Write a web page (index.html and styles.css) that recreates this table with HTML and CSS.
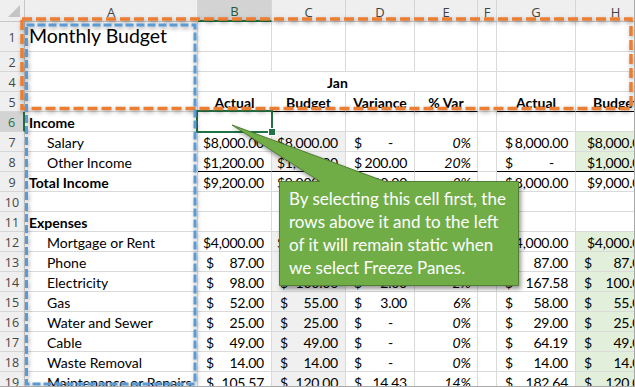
FILE: index.html
```html
<!DOCTYPE html>
<html>
<head>
<meta charset="utf-8">
<link rel="stylesheet" href="styles.css">
</head>
<body>
<div class="sheet">
  <div class="grid">
    <div class="corner"><svg width="14" height="14" viewBox="0 0 14 14"><polygon points="13,1 13,13 1,13" fill="#c4c4c4"/></svg></div>
    <div class="ch">A</div><div class="ch sel">B</div><div class="ch">C</div><div class="ch">D</div><div class="ch">E</div><div class="ch">F</div><div class="ch">G</div><div class="ch">H</div>

    <div class="rh">1</div><div class="c title">Monthly Budget</div><div class="c"></div><div class="c"></div><div class="c"></div><div class="c"></div><div class="c"></div><div class="c"></div><div class="c"></div>

    <div class="rh">2</div><div class="c"></div><div class="c"></div><div class="c"></div><div class="c"></div><div class="c"></div><div class="c"></div><div class="c"></div><div class="c"></div>

    <div class="rh">4</div><div class="c"></div><div class="c hd span4">Jan</div><div class="c"></div><div class="c"></div><div class="c"></div>

    <div class="rh">5</div><div class="c"></div><div class="c hd ul">Actual</div><div class="c hd ul">Budget</div><div class="c hd ul">Variance</div><div class="c hd ul">% Var</div><div class="c"></div><div class="c hd ul">Actual</div><div class="c hd ul">Budget</div>

    <div class="rh rsel">6</div><div class="c b lbl">Income</div><div class="c"></div><div class="c"></div><div class="c"></div><div class="c"></div><div class="c"></div><div class="c"></div><div class="c"></div>

    <div class="rh">7</div><div class="c ind">Salary</div><div class="c cur">$8,000.00</div><div class="c cur gy">$8,000.00</div><div class="c acc"><span>$</span><span class="dash">-</span></div><div class="c pct">0%</div><div class="c"></div><div class="c acc"><span>$</span><span>8,000.00</span></div><div class="c cur gr">$8,000.00</div>

    <div class="rh">8</div><div class="c ind">Other Income</div><div class="c cur ul">$1,200.00</div><div class="c cur gy ul">$1,000.00</div><div class="c acc ul"><span>$</span><span>200.00</span></div><div class="c pct ul">20%</div><div class="c"></div><div class="c acc ul"><span>$</span><span class="dash">-</span></div><div class="c cur gr ul">$1,000.00</div>

    <div class="rh">9</div><div class="c b lbl">Total Income</div><div class="c cur">$9,200.00</div><div class="c cur">$9,000.00</div><div class="c acc"><span>$</span><span>200.00</span></div><div class="c pct">2%</div><div class="c"></div><div class="c acc"><span>$</span><span>8,000.00</span></div><div class="c cur">$9,000.00</div>

    <div class="rh">10</div><div class="c"></div><div class="c"></div><div class="c"></div><div class="c"></div><div class="c"></div><div class="c"></div><div class="c"></div><div class="c"></div>

    <div class="rh">11</div><div class="c b lbl">Expenses</div><div class="c"></div><div class="c"></div><div class="c"></div><div class="c"></div><div class="c"></div><div class="c"></div><div class="c"></div>

    <div class="rh">12</div><div class="c ind">Mortgage or Rent</div><div class="c cur">$4,000.00</div><div class="c cur gy">$4,000.00</div><div class="c acc"><span>$</span><span class="dash">-</span></div><div class="c pct">0%</div><div class="c"></div><div class="c acc"><span>$</span><span>4,000.00</span></div><div class="c cur gr">$4,000.00</div>

    <div class="rh">13</div><div class="c ind">Phone</div><div class="c acc"><span>$</span><span>87.00</span></div><div class="c acc gy"><span>$</span><span>87.00</span></div><div class="c acc"><span>$</span><span class="dash">-</span></div><div class="c pct">0%</div><div class="c"></div><div class="c acc"><span>$</span><span>87.00</span></div><div class="c acc gr"><span>$</span><span>87.00</span></div>

    <div class="rh">14</div><div class="c ind">Electricity</div><div class="c acc"><span>$</span><span>98.00</span></div><div class="c acc gy"><span>$</span><span>100.00</span></div><div class="c acc"><span>$</span><span>2.00</span></div><div class="c pct">2%</div><div class="c"></div><div class="c acc"><span>$</span><span>167.58</span></div><div class="c acc gr"><span>$</span><span>100.00</span></div>

    <div class="rh">15</div><div class="c ind">Gas</div><div class="c acc"><span>$</span><span>52.00</span></div><div class="c acc gy"><span>$</span><span>55.00</span></div><div class="c acc"><span>$</span><span>3.00</span></div><div class="c pct">6%</div><div class="c"></div><div class="c acc"><span>$</span><span>58.00</span></div><div class="c acc gr"><span>$</span><span>55.00</span></div>

    <div class="rh">16</div><div class="c ind">Water and Sewer</div><div class="c acc"><span>$</span><span>25.00</span></div><div class="c acc gy"><span>$</span><span>25.00</span></div><div class="c acc"><span>$</span><span class="dash">-</span></div><div class="c pct">0%</div><div class="c"></div><div class="c acc"><span>$</span><span>29.00</span></div><div class="c acc gr"><span>$</span><span>25.00</span></div>

    <div class="rh">17</div><div class="c ind">Cable</div><div class="c acc"><span>$</span><span>49.00</span></div><div class="c acc gy"><span>$</span><span>49.00</span></div><div class="c acc"><span>$</span><span class="dash">-</span></div><div class="c pct">0%</div><div class="c"></div><div class="c acc"><span>$</span><span>64.19</span></div><div class="c acc gr"><span>$</span><span>49.00</span></div>

    <div class="rh">18</div><div class="c ind">Waste Removal</div><div class="c acc"><span>$</span><span>14.00</span></div><div class="c acc gy"><span>$</span><span>14.00</span></div><div class="c acc"><span>$</span><span class="dash">-</span></div><div class="c pct">0%</div><div class="c"></div><div class="c acc"><span>$</span><span>14.00</span></div><div class="c acc gr"><span>$</span><span>14.00</span></div>

    <div class="rh">19</div><div class="c ind">Maintenance or Repairs</div><div class="c acc"><span>$</span><span>105.57</span></div><div class="c acc gy"><span>$</span><span>120.00</span></div><div class="c acc"><span>$</span><span>14.43</span></div><div class="c pct">14%</div><div class="c"></div><div class="c acc"><span>$</span><span>182.64</span></div><div class="c acc gr"><span>$</span><span>120.00</span></div>
  </div>

  <div class="selbox"><div class="handle"></div></div>

  <svg class="frames" width="635" height="387" viewBox="0 0 635 387">
    <rect class="orange" x="22" y="19" width="609" height="89.5"/>
    <rect class="blue" x="26.5" y="25" width="168.5" height="359"/>
  </svg>

  <svg class="callout-shape" width="635" height="387" viewBox="0 0 635 387">
    <path d="M279.5,181.5 L320,181.5 L232,125 L385,181.5 L518.5,181.5 L518.5,285.5 L279.5,285.5 Z"/>
  </svg>
  <div class="callout-text">By selecting this cell first, the<br>rows above it and to the left<br>of it will remain static when<br>we select Freeze Panes.</div>
</div>
</body>
</html>
```
FILE: styles.css
```css
html, body {
  margin: 0;
  padding: 0;
  background: #ffffff;
}
.sheet {
  position: relative;
  width: 634px;
  height: 386px;
  overflow: hidden;
  border-right: 1px solid #a8a8a8;
  border-bottom: 1px solid #a8a8a8;
  font-family: Lato, "Liberation Sans", sans-serif;
  font-size: 14px;
  color: #000;
}
.grid {
  display: grid;
  grid-template-columns: 25px 173px 74px 74px 69px 63px 19px 79px 80px;
  grid-template-rows: 22px 30px repeat(17, 20px);
}
.corner {
  background: #efefef;
  border-right: 1px solid #c6c6c6;
  border-bottom: 1px solid #c6c6c6;
  display: flex;
  align-items: flex-end;
  justify-content: flex-end;
  padding: 0 3px 3px 0;
}
.ch {
  background: #efefef;
  border-right: 1px solid #d6d6d6;
  border-bottom: 1px solid #c6c6c6;
  display: flex;
  align-items: center;
  justify-content: center;
  font-family: "Open Sans", "Noto Sans", sans-serif;
  font-size: 13px;
  color: #444;
  padding-top: 2px;
}
.ch.sel {
  background: #d3d3d3;
  border-bottom: 2px solid #217346;
  color: #1f5a38;
}
.rh {
  background: #efefef;
  border-right: 1px solid #c6c6c6;
  border-bottom: 1px solid #d6d6d6;
  display: flex;
  align-items: center;
  justify-content: center;
  font-family: "Open Sans", "Noto Sans", sans-serif;
  font-size: 12.5px;
  color: #444;
  padding-top: 1px;
}
.rh.rsel {
  background: #d3d3d3;
  border-right: 2px solid #217346;
  color: #217346;
}
.c {
  border-right: 1px solid #dadada;
  border-bottom: 1px solid #dadada;
  display: flex;
  align-items: center;
  padding: 1px 4px 0 4px;
  white-space: nowrap;
  line-height: 19px;
  min-width: 0;
}
.title {
  font-size: 19.5px;
  padding-left: 4px;
  align-items: flex-end;
  padding-bottom: 2px;
  line-height: 26px;
}
.b { font-weight: bold; }
.lbl { padding-left: 4px; }
.ind { padding-left: 22px; }
.hd {
  font-weight: bold;
  justify-content: center;
}
.span4 { grid-column: span 4; }
.ul { border-bottom: 1px solid #000; }
.cur {
  justify-content: flex-end;
  padding-right: 7px;
  letter-spacing: -0.25px;
}
.acc {
  justify-content: space-between;
  padding-left: 8px;
  padding-right: 7px;
  letter-spacing: -0.25px;
}
.dash { padding-right: 14px; }
.pct {
  justify-content: flex-end;
  font-style: italic;
  padding-right: 6px;
}
.gy { background: #f0f0f0; }
.gr { background: #e2efda; }

.selbox {
  position: absolute;
  left: 196px;
  top: 110px;
  width: 77px;
  height: 23px;
  box-sizing: border-box;
  border: 2px solid #217346;
}
.handle {
  position: absolute;
  right: -5px;
  bottom: -5px;
  width: 6px;
  height: 6px;
  background: #217346;
  border: 1px solid #fff;
}
.frames {
  position: absolute;
  left: 0;
  top: 0;
  pointer-events: none;
  filter: drop-shadow(1px 2px 2px rgba(0,0,0,0.35));
}
.frames rect { fill: none; }
.orange {
  stroke: #ed7d31;
  stroke-width: 3.5;
  stroke-dasharray: 10 4;
}
.blue {
  stroke: #5b9bd5;
  stroke-width: 3;
  stroke-dasharray: 8 3;
}
.callout-shape {
  position: absolute;
  left: 0;
  top: 0;
  pointer-events: none;
  filter: drop-shadow(2px 3px 2px rgba(0,0,0,0.4));
}
.callout-shape path {
  fill: #70ad47;
  stroke: #507e32;
  stroke-width: 1;
}
.callout-text {
  position: absolute;
  left: 289px;
  top: 187px;
  color: #fff;
  font-size: 17px;
  line-height: 23px;
  white-space: nowrap;
}
```
